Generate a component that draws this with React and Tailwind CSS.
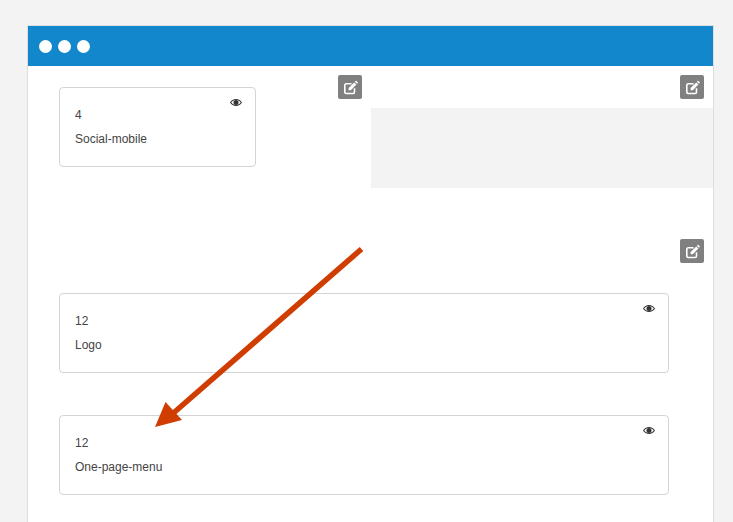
import React from 'react';

const EditIcon = () => (
    <svg width="24" height="24" viewBox="0 0 24 24" fill="none">
        <path d="M13.5 8.8H8.2a1.4 1.4 0 0 0-1.4 1.4v6.9a1.4 1.4 0 0 0 1.4 1.4h6.9a1.4 1.4 0 0 0 1.4-1.4v-3.8" stroke="#fff" strokeWidth="1.6" />
        <path d="M10.6 13l5.6-5.6 2.2 2.2-5.6 5.6h-2.2zM16.9 6.7l.7-.7a.6.6 0 0 1 .8 0l1.3 1.3a.6.6 0 0 1 0 .8l-.7.7z" fill="#fff" />
    </svg>
);

const EyeIcon = () => (
    <svg className="absolute right-[13px] top-[9px]" width="12" height="11" viewBox="0 0 12 11">
        <path fillRule="evenodd" d="M0 5.5C1.3 3.3 3.5 2 6 2s4.700 1.300 6 3.500C10.700 7.700 8.500 9 6 9S1.300 7.700 0 5.500zM1.200 5.500C2.300 7 4 7.900 6 7.900S9.700 7 10.800 5.500C9.700 4 8 3.100 6 3.100S2.300 4 1.200 5.500z" fill="#333" />
        <circle cx="6" cy="5.400" r="2.500" fill="#333" />
    </svg>
);

const EditButton = ({ className = '' }) => (
    <button className={`flex h-6 w-6 shrink-0 items-center justify-center rounded-[2px] bg-[#808080] ${className}`}>
        <EditIcon />
    </button>
);

const Card = ({ size, name, className = '' }) => (
    <div className={`relative h-20 rounded-[4px] border border-[#d4d4d4] bg-white pl-[15px] pt-[15px] text-[12px] leading-6 text-[#444] ${className}`}>
        <EyeIcon />
        <div>{size}</div>
        <div>{name}</div>
    </div>
);

const App = () => (
    <div className="relative h-[522px] w-[733px] overflow-hidden bg-[#f3f3f3] pl-[27px] pt-[25px] font-['Liberation_Sans',Arial,sans-serif]">
        <div className="h-[600px] w-[687px] border border-[#dedede] bg-white">
            <div className="flex h-10 items-center gap-[6px] bg-[#1287cc] pl-[11px]">
                <span className="h-[13px] w-[13px] rounded-full bg-white" />
                <span className="h-[13px] w-[13px] rounded-full bg-white" />
                <span className="h-[13px] w-[13px] rounded-full bg-white" />
            </div>
            <div className="flex">
                <div className="flex w-[343px] items-start justify-between pl-[31px] pr-[9px] pt-[9px]">
                    <Card size="4" name="Social-mobile" className="mt-3 w-[197px]" />
                    <EditButton />
                </div>
                <div className="flex flex-1 flex-col items-end pt-[9px]">
                    <EditButton className="mr-[9px]" />
                    <div className="mt-[9px] h-20 w-full bg-[#f3f3f3]" />
                </div>
            </div>
            <div className="flex flex-col pt-[51px]">
                <EditButton className="mr-[9px] self-end" />
                <Card size="12" name="Logo" className="ml-[31px] mt-[30px] w-[610px]" />
                <Card size="12" name="One-page-menu" className="ml-[31px] mt-[42px] w-[610px]" />
            </div>
        </div>
        <svg className="absolute left-0 top-0" width="733" height="522" viewBox="0 0 733 522">
            <line x1="361.500" y1="249" x2="170" y2="416" stroke="#cf3e00" strokeWidth="5.500" />
            <polygon points="155,427 165.500,402 182,420" fill="#cf3e00" />
        </svg>
    </div>
);

export default App;
